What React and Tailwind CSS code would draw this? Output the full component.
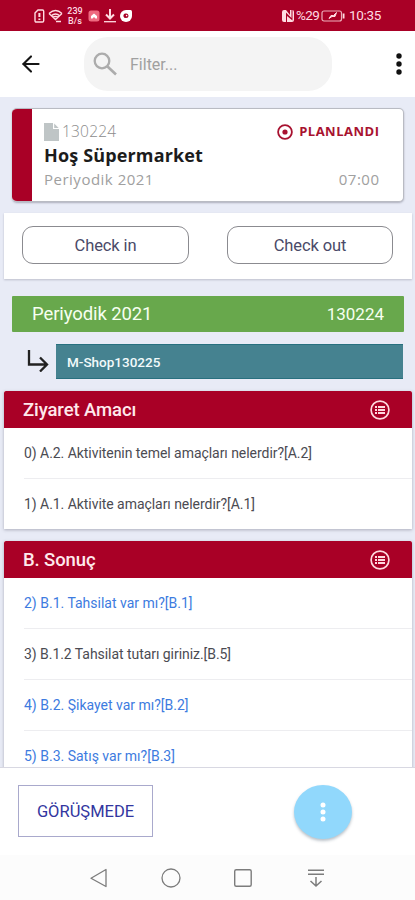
import { ArrowLeft } from 'lucide-react';

const sections = [
  {
    title: 'Ziyaret Amacı',
    rows: [
      { text: '0) A.2. Aktivitenin temel amaçları nelerdir?[A.2]' },
      { text: '1) A.1. Aktivite amaçları nelerdir?[A.1]' },
    ],
  },
  {
    title: 'B. Sonuç',
    rows: [
      { text: '2) B.1. Tahsilat var mı?[B.1]', link: true },
      { text: '3) B.1.2 Tahsilat tutarı giriniz.[B.5]' },
      { text: '4) B.2. Şikayet var mı?[B.2]', link: true },
      { text: '5) B.3. Satış var mı?[B.3]', link: true },
    ],
  },
];

function StatusBar() {
  return (
    <div className="h-[31px] shrink-0 bg-[#a90026] text-[#ffdce2] flex items-center pl-[34px] pr-[33px]">
      <svg className="w-[11px] h-[14px] mt-px" viewBox="0 0 11 14" fill="none" stroke="currentColor" strokeWidth="1.4">
        <path d="M1 4l3-3h4.5q1.2 0 1.2 1.2v9.6q0 1.2-1.2 1.2H2.2q-1.2 0-1.2-1.2z" />
        <path d="M5.4 4v4M5.4 9.5v1.5" strokeWidth="2" />
      </svg>
      <svg className="w-[15px] h-[14px] ml-[3px] mt-px" viewBox="0 0 15 14" fill="none" stroke="currentColor" strokeWidth="1.3">
        <path d="M1 4.5q6.5-6 13 0M3 7q4.500-4 9 0M1 4.5l6.5 6L14 4.5M5 8.500q2.500-2 5 0M8 12.500h5" />
      </svg>
      <div className="ml-1 w-[16px] text-center font-[Roboto] font-medium text-[9px] leading-[10px]">
        <div>239</div>
        <div>B/s</div>
      </div>
      <svg className="w-[12px] h-[12px] ml-[5px]" viewBox="0 0 12 12">
        <rect x="0.5" y="0.5" width="11" height="11" rx="2.5" fill="#ee6a80" />
        <path d="M3 8.500V6l3-2.500L9 6v2.500H7.500L6 7 4.500 8.500z" fill="#fff" />
      </svg>
      <svg className="w-[12px] h-[14px] ml-1 mt-px" viewBox="0 0 12 14" fill="none" stroke="currentColor">
        <path d="M6 0v9M2 5.500l4 4 4-4" strokeWidth="2" />
        <path d="M0 12.700h12" strokeWidth="1.3" />
      </svg>
      <svg className="w-[12px] h-[12px] ml-[4px]" viewBox="0 0 12 12">
        <path d="M6 0h4.500Q12 0 12 1.500V6A6 6 0 1 1 6 0z" fill="#fff" />
        <path d="M3.500 6.500a2.500 2.500 0 0 1 5-1q0 2.500-2.500 2.500-2.300 0-2.500-1.500z" fill="#a90026" />
        <circle cx="6.6" cy="5.6" r="0.8" fill="#fff" />
      </svg>
      <div className="grow" />
      <svg className="w-[12px] h-[12px]" viewBox="0 0 12 12" fill="currentColor">
        <path d="M2 0h2l4 5V0h1.500v8L4 2.500V12H2Q0 12 0 10V2Q0 0 2 0z" />
        <path d="M10.500 0q1.500 0 1.500 2v8q0 2-2 2H5V6l5.500 4.500z" />
      </svg>
      <span className="ml-[2px] font-[Roboto] text-[13.5px] w-[25px] whitespace-nowrap tracking-[-0.6px]">%29</span>
      <svg className="w-[24px] h-[12px]" viewBox="0 0 24 12" fill="none" stroke="currentColor">
        <rect x="1" y="1" width="19.5" height="10" rx="2" strokeWidth="1.2" opacity="0.8" />
        <path d="M22.600 3.500v5" strokeWidth="1.8" />
        <path d="M8 8.500l2-3h2.500l3-3-1.500 4H11z" fill="currentColor" strokeWidth="1" />
      </svg>
      <span className="ml-[4px] w-[33px] font-[Roboto] text-[13.5px] whitespace-nowrap tracking-[-0.3px]">10:35</span>
    </div>
  );
}

function Header() {
  return (
    <header className="h-[66px] shrink-0 bg-white flex items-center pl-[18px] pr-[13px]">
      <ArrowLeft className="w-[26px] h-[26px] text-[#151515]" strokeWidth={1.9} />
      <div className="ml-[40px] w-[248px] h-[54px] rounded-[24px] bg-[#f4f4f4] flex items-center pl-[9px]">
        <svg className="w-[24px] h-[24px]" viewBox="0 0 24 24" fill="none" stroke="#acacac" strokeWidth="2.3">
          <circle cx="9" cy="9" r="7.3" />
          <path d="M14.500 14.500l8.500 8" strokeWidth="2.6" />
        </svg>
        <span className="ml-[13px] pt-[2px] font-[Roboto] text-base text-[#a0a0a0]">Filter...</span>
      </div>
      <div className="grow" />
      <svg className="w-[6px] h-[22px]" viewBox="0 0 6 22" fill="#111">
        <circle cx="3" cy="3" r="2.7" />
        <circle cx="3" cy="11" r="2.7" />
        <circle cx="3" cy="19" r="2.7" />
      </svg>
    </header>
  );
}

function VisitCard() {
  return (
    <div className="ml-[12px] mr-[11px] mt-[11px] h-[94px] shrink-0 flex rounded-[5px] overflow-hidden bg-white border border-[#b9bbc3] border-l-0 shadow-[0_1px_2px_rgba(60,60,80,0.35)] font-['Open_Sans']">
      <div className="w-[20px] bg-[#a90026]" />
      <div className="grow pl-[12px] pr-[24px] pt-[11px]">
        <div className="flex items-center h-[23px]">
          <svg className="w-[15px] h-[18px]" viewBox="0 0 15 18" fill="#bfc5c6">
            <path d="M0 0h9v6h6v12H0z" />
            <path d="M10.200 0.500L14.700 5h-4.500z" />
          </svg>
          <span className="ml-[3px] pt-px text-[15.5px] font-light text-[#8c8c8c] tracking-[0.2px]">130224</span>
          <div className="grow" />
          <svg className="w-[16px] h-[16px] mr-[6px]" viewBox="0 0 16 16">
            <circle cx="8" cy="8" r="6.9" fill="none" stroke="#a81230" strokeWidth="1.8" />
            <circle cx="8" cy="8" r="2.6" fill="#a81230" />
          </svg>
          <span className="pt-px text-[13px] font-bold text-[#a81230] tracking-[0.5px] -mr-[0.5px]">PLANLANDI</span>
        </div>
        <div className="h-[24px] leading-[24px] text-[18px] font-bold text-[#1c1c1c] whitespace-nowrap tracking-[0.15px]">Hoş Süpermarket</div>
        <div className="h-[24px] leading-[24px] flex justify-between text-[15px] text-[#a0a0a0]">
          <span className="tracking-[0.5px]">Periyodik 2021</span>
          <span className="tracking-[0.5px] -mr-[0.5px]">07:00</span>
        </div>
      </div>
    </div>
  );
}

function CheckButtons() {
  return (
    <div className="ml-[4px] mr-[3px] mt-[11px] h-[66px] shrink-0 bg-white shadow-[0_1px_2px_rgba(60,60,80,0.25)] flex justify-between pl-[18px] pr-[19px] pt-[13px] font-[Roboto] text-[16.5px] tracking-[-0.1px] text-[#4a4a68]">
      <button className="w-[167px] h-[38px] pt-[2px] rounded-[11px] border border-[#8b8b90]">Check in</button>
      <button className="w-[166px] h-[38px] pt-[2px] rounded-[11px] border border-[#8b8b90]">Check out</button>
    </div>
  );
}

function Section({ title, rows }) {
  return (
    <section className="ml-[4px] mr-[3px] mb-[12px] shrink-0 bg-white shadow-[0_1px_3px_rgba(60,60,80,0.35)] font-[Roboto]">
      <div className="h-[37px] rounded-t-[2px] bg-[#a90026] flex items-center justify-between pl-[19px] pr-[22px]">
        <h2 className="pt-[2px] text-[18.5px] tracking-[-0.1px] font-medium text-[#ffe9ec]">{title}</h2>
        <svg className="w-[20px] h-[20px]" viewBox="0 0 20 20" fill="none" stroke="#ffd9df">
          <circle cx="10" cy="10" r="8.9" strokeWidth="1.7" />
          <path d="M5 7h2M5 10h2M5 13h2M8 7h7M8 10h7M8 13h7" strokeWidth="1.9" />
        </svg>
      </div>
      <ul>
        {rows.map((row, i) => (
          <li key={row.text} className={i === 0 ? 'ml-[20px]' : 'ml-[20px] border-t border-[#ededf0]'}>
            <div
              className={
                row.link
                  ? 'h-[50px] flex items-center text-[14px] whitespace-nowrap text-[#3d7be0]'
                  : 'h-[50px] flex items-center text-[14px] tracking-[-0.05px] whitespace-nowrap text-[#4b4b52]'
              }
            >
              {row.text}
            </div>
          </li>
        ))}
      </ul>
    </section>
  );
}

function NavBar() {
  return (
    <div className="h-[45px] shrink-0 bg-[#fcfcfc] flex items-center pl-[89px]">
      <svg className="w-[20px] h-[20px]" viewBox="0 0 20 20" fill="none" stroke="#7c7c7c" strokeWidth="1.3">
        <path d="M2 10.200L17 1.500v17z" strokeLinejoin="round" />
      </svg>
      <svg className="w-[20px] h-[20px] ml-[52px]" viewBox="0 0 20 20" fill="none" stroke="#7c7c7c" strokeWidth="1.3">
        <circle cx="10" cy="10" r="9" />
      </svg>
      <svg className="w-[20px] h-[20px] ml-[52px]" viewBox="0 0 20 20" fill="none" stroke="#7c7c7c" strokeWidth="1.4">
        <rect x="1.7" y="1.7" width="16.5" height="16.5" rx="1.5" />
      </svg>
      <svg className="w-[18px] h-[20px] ml-[54px]" viewBox="0 0 18 20" fill="none" stroke="#7c7c7c" strokeWidth="1.5">
        <path d="M1 2.200h16M1 6.200h16M9 9v9M3.500 13L9 18l5.500-5" />
      </svg>
    </div>
  );
}

export default function App() {
  return (
    <div className="w-[415px] h-[900px] overflow-hidden flex flex-col bg-white">
      <StatusBar />
      <Header />
      <main className="h-[671px] shrink-0 overflow-hidden flex flex-col bg-[#e8ebf6] border-b border-[#d8d8e2]">
        <VisitCard />
        <CheckButtons />
        <div className="ml-[12px] mr-[11px] mt-[17px] h-[36px] pt-[2px] shrink-0 rounded-[1px] bg-[#68a84c] text-[#f6fff0] flex items-center justify-between pl-[20px] pr-[20px] font-[Roboto] text-[18.5px]">
          <span className="tracking-[-0.1px]">Periyodik 2021</span>
          <span className="text-[17px]">130224</span>
        </div>
        <div className="mt-[12px] mb-[12px] h-[35px] shrink-0 flex items-center pr-[12px]">
          <svg className="w-[22px] h-[24px] ml-[27px] mr-[7px] mb-[3px]" viewBox="0 0 22 24" fill="none" stroke="#222" strokeWidth="2.3">
            <path d="M2 2v14.500h17M13 9.500l7 7-7 7" />
          </svg>
          <div className="grow h-[35px] pt-[2px] bg-[#458290] border-y border-[#28707f] text-[#f2fafb] flex items-center pl-[11px] font-[Roboto] text-[13.5px] font-medium">
            M-Shop130225
          </div>
        </div>
        {sections.map((section) => (
          <Section key={section.title} title={section.title} rows={section.rows} />
        ))}
      </main>
      <footer className="h-[87px] shrink-0 bg-white flex items-start pt-[17px] pl-[18px] pr-[63px] justify-between">
        <button className="w-[135px] h-[52px] pt-[2px] border border-[#a9a9cc] font-[Roboto] text-[16.5px] text-[#3236a0]">GÖRÜŞMEDE</button>
        <button className="w-[58px] h-[54px] rounded-[50%] bg-[#91d8fc] shadow-[0_2px_3px_rgba(60,80,100,0.35)] flex items-center justify-center">
          <svg className="w-[6px] h-[20px]" viewBox="0 0 6 20" fill="#fff">
            <circle cx="3" cy="3" r="2.5" />
            <circle cx="3" cy="10" r="2.5" />
            <circle cx="3" cy="17" r="2.5" />
          </svg>
        </button>
      </footer>
      <NavBar />
    </div>
  );
}
